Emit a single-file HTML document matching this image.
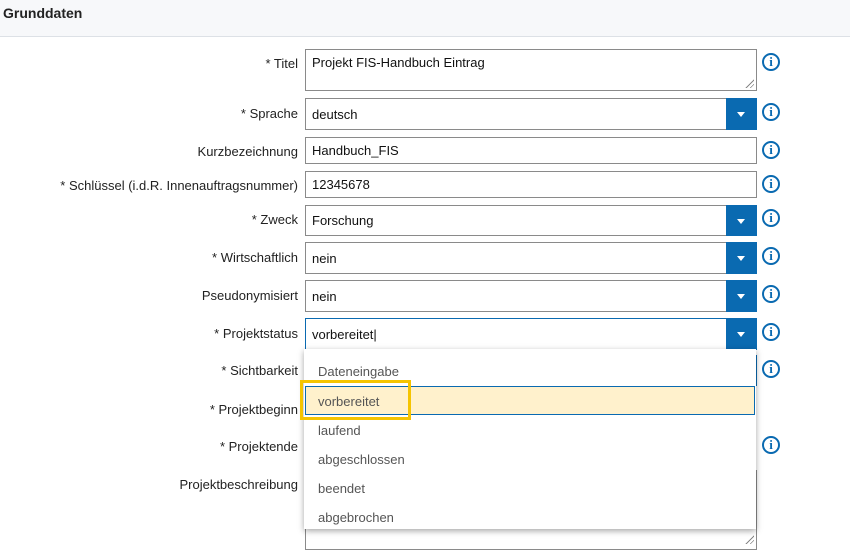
<!DOCTYPE html>
<html><head><meta charset="utf-8"><style>
*{box-sizing:border-box;margin:0;padding:0}
body{width:850px;height:547px;overflow:hidden;background:#fff;font-family:"Liberation Sans",sans-serif;font-size:13px;color:#222;position:relative}
.hdr{position:absolute;left:0;top:0;width:850px;height:37px;background:#f7f8fa;border-bottom:1px solid #dde1e6}
.hdr span{position:absolute;left:3px;top:5px;font-weight:bold;font-size:14px;color:#222}
.lbl{position:absolute;right:552px;white-space:nowrap;font-size:13px;color:#222}
.box{position:absolute;left:305px;width:452px;border:1px solid #8a8a8a;background:#fff;padding-left:6px;font-size:13px;color:#111}
.btn{position:absolute;right:-1px;top:-1px;bottom:-1px;width:31px;background:#0a6ab1}
.btn:after{content:"";position:absolute;left:11px;top:50%;margin-top:-2px;border-left:4px solid transparent;border-right:4px solid transparent;border-top:5px solid #fff}
.info{position:absolute;left:762px;width:18px;height:18px;border:2px solid #0a6ab1;border-radius:50%;color:#0a6ab1;font-weight:bold;font-size:13px;line-height:14px;text-align:center;font-family:"Liberation Serif",serif}
.rz{position:absolute;right:2px;bottom:2px;width:10px;height:10px;background:repeating-linear-gradient(135deg,transparent 0 2px,#888 2px 3px);clip-path:polygon(100% 0,100% 100%,0 100%)}
.dd{position:absolute;left:304px;top:349px;width:452px;height:180px;background:#fff;box-shadow:0 2px 6px rgba(0,0,0,.35);}
.it{position:absolute;left:14px;font-size:13px;color:#555}
</style></head><body>
<div class="hdr"><span>Grunddaten</span></div>

<div class="lbl" style="top:56px">* Titel</div>
<div class="box" style="top:49px;height:42px;padding-top:5px">Projekt FIS-Handbuch Eintrag<div class="rz"></div></div>
<div class="info" style="top:53px">i</div>

<div class="lbl" style="top:106px">* Sprache</div>
<div class="box" style="top:98px;height:32px;line-height:31px">deutsch<div class="btn"></div></div>
<div class="info" style="top:103px">i</div>

<div class="lbl" style="top:144px">Kurzbezeichnung</div>
<div class="box" style="top:137px;height:27px;line-height:26px">Handbuch_FIS</div>
<div class="info" style="top:141px">i</div>

<div class="lbl" style="top:178px">* Schlüssel (i.d.R. Innenauftragsnummer)</div>
<div class="box" style="top:171px;height:27px;line-height:26px">12345678</div>
<div class="info" style="top:175px">i</div>

<div class="lbl" style="top:212px">* Zweck</div>
<div class="box" style="top:205px;height:31px;line-height:30px">Forschung<div class="btn"></div></div>
<div class="info" style="top:209px">i</div>

<div class="lbl" style="top:250px">* Wirtschaftlich</div>
<div class="box" style="top:242px;height:32px;line-height:31px">nein<div class="btn"></div></div>
<div class="info" style="top:247px">i</div>

<div class="lbl" style="top:288px">Pseudonymisiert</div>
<div class="box" style="top:280px;height:32px;line-height:31px">nein<div class="btn"></div></div>
<div class="info" style="top:285px">i</div>

<div class="lbl" style="top:326px">* Projektstatus</div>
<div class="box" style="top:318px;height:32px;line-height:31px;border-color:#0a6ab1">vorbereitet|<div class="btn"></div></div>
<div class="info" style="top:323px">i</div>

<div class="lbl" style="top:363px">* Sichtbarkeit</div>
<div class="box" style="top:355px;height:31px;border-color:#0a6ab1"></div>
<div class="info" style="top:360px">i</div>

<div class="lbl" style="top:402px">* Projektbeginn</div>
<div class="lbl" style="top:439px">* Projektende</div>
<div class="info" style="top:436px">i</div>
<div class="lbl" style="top:477px">Projektbeschreibung</div>
<div class="box" style="top:470px;height:80px"><div class="rz" style="bottom:5px"></div></div>

<div class="dd">
<div class="it" style="top:15px">Dateneingabe</div>
<div style="position:absolute;left:1px;top:37px;width:450px;height:29px;background:#fff1cc;border:1px solid #0a6ab1"></div>
<div class="it" style="top:45px">vorbereitet</div>
<div class="it" style="top:74px">laufend</div>
<div class="it" style="top:103px">abgeschlossen</div>
<div class="it" style="top:132px">beendet</div>
<div class="it" style="top:161px">abgebrochen</div>
</div>
<div style="position:absolute;left:300px;top:380px;width:111px;height:40px;border:3px solid #f5c400"></div>
</body></html>
